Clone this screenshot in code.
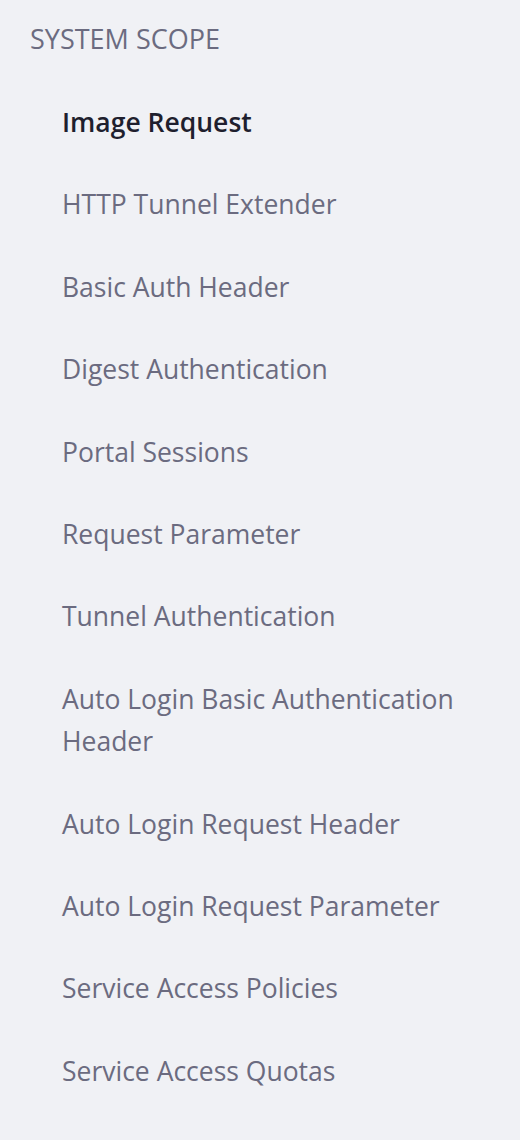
const items = [
    'Image Request',
    'HTTP Tunnel Extender',
    'Basic Auth Header',
    'Digest Authentication',
    'Portal Sessions',
    'Request Parameter',
    'Tunnel Authentication',
    'Auto Login Basic Authentication Header',
    'Auto Login Request Header',
    'Auto Login Request Parameter',
    'Service Access Policies',
    'Service Access Quotas',
];

const App = () => {
    const active = 'Image Request';

    return (
        <div
            className="min-h-[1140px] w-[520px] bg-[#f0f1f5] pt-[18px]"
            style={{ fontFamily: "'Open Sans', 'Noto Sans', sans-serif" }}
        >
            <div className="px-[30px] text-[27px] leading-[42px] text-[#6b6b80]">
                SYSTEM SCOPE
            </div>
            <ul className="mt-[21px] pr-[20px]">
                {items.map((item) => (
                    <li key={item}>
                        <a
                            href="#"
                            className={
                                item === active
                                    ? 'block py-[20px] pl-[62px] text-[26.5px] leading-[42.4px] font-semibold text-[#1f1f2e]'
                                    : 'block py-[20px] pl-[62px] text-[26.5px] leading-[42.4px] text-[#6b6b80]'
                            }
                        >
                            {item}
                        </a>
                    </li>
                ))}
            </ul>
        </div>
    );
};

export default App;
